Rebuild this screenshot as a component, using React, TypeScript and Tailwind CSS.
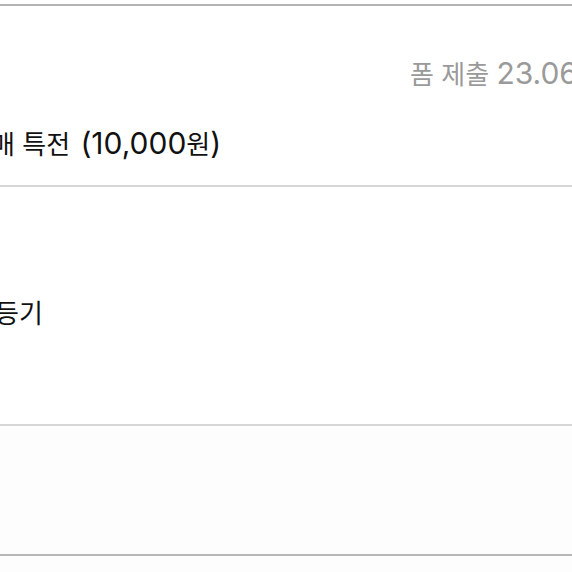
export default function App() {
  return (
    <div className="h-[572px] w-[572px] overflow-hidden bg-white font-['Inter','Noto_Sans_CJK_KR',sans-serif]">
      <div className="h-[4px] bg-white" />
      <section className="flex h-[181px] flex-col border-t-2 border-[#b3b3b3]">
        <p className="mt-[51px] whitespace-nowrap pl-[410px] text-[30px] leading-[32px] text-[#9a9a9a]">
          <span className="text-[26px]">폼 제출 </span>
          <span>23.06</span>
        </p>
        <p className="ml-[-9px] mt-[35px] whitespace-nowrap text-[30px] leading-[34px] text-[#111]">
          <span className="text-[26px]">매 특전 </span>
          <span className="ml-[3px]">
            (10,000<span className="text-[26px]">원</span>)
          </span>
        </p>
      </section>
      <section className="flex h-[239px] items-center border-t-2 border-[#d6d6d6]">
        <p className="ml-[-5px] mt-[16px] whitespace-nowrap text-[26px] leading-[34px] text-[#111]">등기</p>
      </section>
      <section className="h-[130px] border-t-2 border-[#d6d6d6] bg-[#fdfdfd]" />
      <div className="h-[18px] border-t-2 border-[#b7b7b7] bg-[#fdfdfd]" />
    </div>
  );
}
